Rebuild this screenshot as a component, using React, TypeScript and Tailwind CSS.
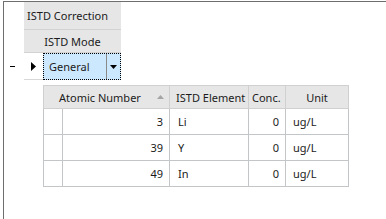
import React from "react";

const rows = [
  { num: 3, el: "Li", conc: 0, unit: "ug/L" },
  { num: 39, el: "Y", conc: 0, unit: "ug/L" },
  { num: 49, el: "In", conc: 0, unit: "ug/L" },
];

export default function App() {
  return (
    <div
      className="w-[386px] h-[219px] bg-white overflow-hidden text-[11px] text-[#1b1b1b] leading-none whitespace-nowrap"
      style={{ fontFamily: '"Noto Sans", "Open Sans", sans-serif' }}
    >
      <div className="ml-[3px] mt-[1px] h-[230px] border-l border-t border-[#6e6e6e] pl-[20px]">
        {/* band headers */}
        <div className="w-[97px]">
          <div className="h-[28px] bg-[#e6e6e6] border-b border-[#d2d2d2] flex items-center pl-[3px]">
            ISTD Correction
          </div>
          <div className="h-[23px] bg-[#e6e6e6] border-b border-[#d2d2d2] flex items-center justify-center">
            ISTD Mode
          </div>
        </div>

        {/* master row */}
        <div className="relative flex h-[27px]">
          <div className="absolute left-[-14px] top-[13px] w-[5px] h-px bg-black" />
          <div className="w-[19px] bg-white border-b border-[#d8d8d8] flex items-center justify-center">
            <svg width="5" height="9" viewBox="0 0 5 9">
              <path d="M0 0 L5 4.5 L0 9 Z" fill="#000" />
            </svg>
          </div>
          <div className="w-[78px] bg-[#cce8ff] border border-dotted border-black flex items-center">
            <span className="pl-[5px] flex-1">General</span>
            <div className="w-[14px] h-full border-l border-[#8a8a8a] flex items-center justify-center">
              <svg width="7" height="4" viewBox="0 0 7 4">
                <path d="M0 0 L7 0 L3.5 4 Z" fill="#000" />
              </svg>
            </div>
          </div>
        </div>

        {/* detail grid */}
        <div className="ml-[19px] mt-[5px] w-[305px]">
          <table className="table-fixed border-collapse w-[305px]">
            <colgroup>
              <col className="w-[19px]" />
              <col className="w-[107px]" />
              <col className="w-[79px]" />
              <col className="w-[37px]" />
              <col className="w-[63px]" />
            </colgroup>
            <thead>
              <tr className="h-[23px] bg-[#e6e6e6]">
                <th colSpan={2} className="border border-[#d0d0d0] font-normal text-left relative">
                  <span className="pl-[15px]">Atomic Number</span>
                  <svg className="absolute right-[5px] top-[9px]" width="7" height="4" viewBox="0 0 7 4">
                    <path d="M0 4 L7 4 L3.5 0 Z" fill="#a5a5a5" />
                  </svg>
                </th>
                <th className="border border-[#d0d0d0] font-normal text-left pl-[6px] overflow-hidden">ISTD Element</th>
                <th className="border border-[#d0d0d0] font-normal text-left pl-[3px]">Conc.</th>
                <th className="border border-[#d0d0d0] font-normal text-center">Unit</th>
              </tr>
            </thead>
            <tbody>
              {rows.map((r) => (
                <tr key={r.num} className="h-[26px]">
                  <td className="border border-[#c3c6c9]" />
                  <td className="border border-[#c3c6c9] text-right pr-[6px]">{r.num}</td>
                  <td className="border border-[#c3c6c9] pl-[8px]">{r.el}</td>
                  <td className="border border-[#c3c6c9] text-right pr-[6px]">{r.conc}</td>
                  <td className="border border-[#c3c6c9] pl-[7px]">{r.unit}</td>
                </tr>
              ))}
            </tbody>
          </table>
        </div>
      </div>
    </div>
  );
}
